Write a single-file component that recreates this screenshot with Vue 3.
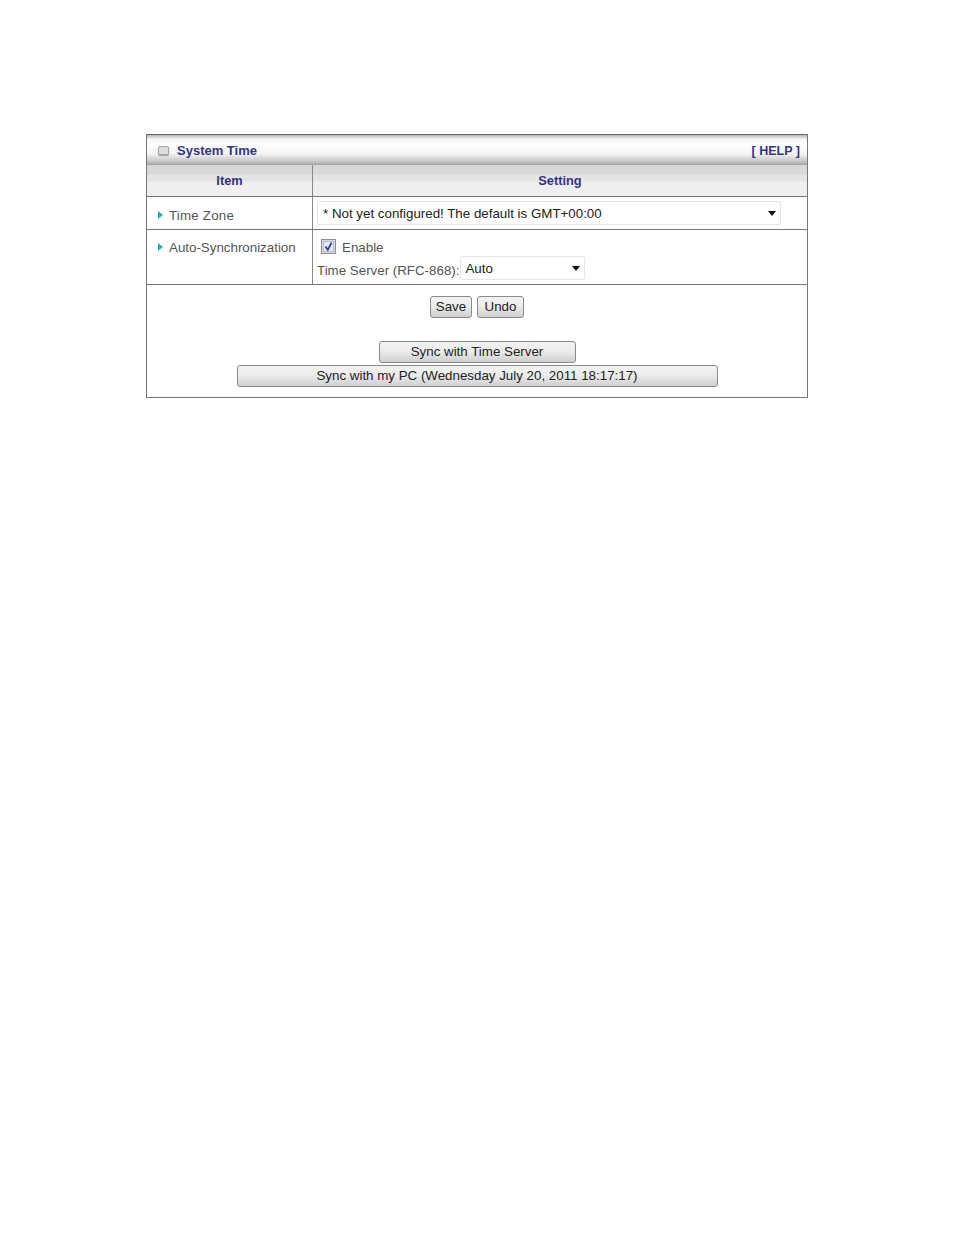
<script setup>
const pcTime = 'Wednesday July 20, 2011 18:17:17'
</script>

<template>
  <div class="page">
    <div class="panel">
      <div class="title-bar">
        <span class="title-icon"></span>
        <span class="title">System Time</span>
        <span class="help">[ HELP ]</span>
      </div>
      <div class="head-row">
        <div class="head-cell item-col">Item</div>
        <div class="head-cell">Setting</div>
      </div>
      <div class="row zone-row">
        <div class="item-col label">
          <svg class="arrow" width="5" height="8" viewBox="0 0 5 8"><path d="M0 0 L5 4 L0 8 Z" fill="#1fb5ad" /></svg>
          <span class="zone-text">Time Zone</span>
        </div>
        <div class="setting">
          <div class="select zone-select">
            <span>* Not yet configured! The default is GMT+00:00</span>
            <i class="caret"></i>
          </div>
        </div>
      </div>
      <div class="row sync-row">
        <div class="item-col label sync-label">
          <svg class="arrow" width="5" height="8" viewBox="0 0 5 8"><path d="M0 0 L5 4 L0 8 Z" fill="#1fb5ad" /></svg>
          <span>Auto-Synchronization</span>
        </div>
        <div class="setting sync-setting">
          <div class="enable-line">
            <svg class="check" width="15" height="15" viewBox="0 0 15 15">
              <rect x="0.5" y="0.5" width="14" height="14" fill="#d5d9e6" stroke="#8f8f8f" />
              <rect x="2.5" y="2.5" width="10" height="10" fill="#e4e8f4" stroke="#b9bfd2" />
              <path d="M4.5 7.5 L6.8 10.8 L10.6 3.6" fill="none" stroke="#2c3f9e" stroke-width="1.8" />
            </svg>
            <span>Enable</span>
          </div>
          <div class="server-line">
            <span>Time Server (RFC-868):</span>
            <div class="select server-select">
              <span>Auto</span>
              <i class="caret"></i>
            </div>
          </div>
        </div>
      </div>
      <div class="actions">
        <div class="save-line">
          <button class="btn save-btn">Save</button>
          <button class="btn undo-btn">Undo</button>
        </div>
        <button class="btn server-btn">Sync with Time Server</button>
        <button class="btn pc-btn">Sync with my PC ({{ pcTime }})</button>
      </div>
    </div>
  </div>
</template>

<style scoped>
.page { width: 954px; height: 1235px; padding: 134px 0 0 146px; box-sizing: border-box; background: #fff; font-family: "Liberation Sans", Arial, sans-serif; font-size: 13.33px; color: #555; overflow: hidden; }
.panel { width: 662px; box-sizing: border-box; border: 1px solid #777; border-top-color: #666; }
.title-bar { height: 30px; box-sizing: border-box; display: flex; align-items: center; padding: 0 7px 0 11px; background: linear-gradient(#b5b5b5 0, #f4f4f4 4px, #fff 10px, #f2f2f2 19px, #c2c2c2 27px, #a0a0a0 30px); }
.title-icon { width: 9px; height: 7px; border: 1px solid #a5a5a5; border-radius: 2px; background: #ddd; box-shadow: 0 1px 1px #999; }
.title { margin-left: 8px; font-size: 13px; font-weight: bold; color: #33338a; }
.help { margin-left: auto; margin-top: 2px; font-size: 12.5px; font-weight: bold; color: #33338a; }
.head-row { display: grid; grid-template-columns: 166px 1fr; height: 32px; border-bottom: 1px solid #777; box-sizing: border-box; background: linear-gradient(#d8d8d8 0, #d8d8d8 9px, #e4e4e4 10px, #e4e4e4 16px, #efefef 17px, #efefef 32px); }
.head-cell { display: flex; align-items: center; justify-content: center; font-size: 12.8px; font-weight: bold; color: #33338a; }
.item-col { border-right: 1px solid #888; }
.row { display: grid; grid-template-columns: 166px 1fr; box-sizing: border-box; border-bottom: 1px solid #777; }
.zone-row { height: 33px; }
.sync-row { height: 55px; }
.label { display: flex; align-items: center; gap: 6px; padding-left: 11px; }
.zone-text { letter-spacing: 0.2px; }
.zone-row .label { padding-top: 4px; }
.sync-label { align-items: flex-start; padding-top: 10px; }
.sync-label .arrow { margin-top: 3px; }
.setting { padding-left: 4px; display: flex; align-items: center; }
.select { position: relative; height: 24px; box-sizing: border-box; display: flex; align-items: center; padding-left: 5px; border: 1px solid #e6e6e6; border-radius: 2px; background: #fff; color: #222; }
.zone-select { width: 464px; }
.server-select { width: 125px; margin-left: 1px; padding-left: 4px; }
.caret { position: absolute; right: 4px; top: 9px; width: 0; height: 0; border-left: 4.5px solid transparent; border-right: 4.5px solid transparent; border-top: 5px solid #111; }
.sync-setting { flex-direction: column; align-items: flex-start; padding-top: 8px; }
.enable-line { display: flex; align-items: center; gap: 6px; padding-left: 4px; height: 18px; }
.check { margin-top: -2px; }
.server-line { display: flex; align-items: flex-start; }
.server-line > span { margin-top: 7px; }
.actions { height: 112px; display: flex; flex-direction: column; align-items: center; }
.save-line { display: flex; gap: 5px; margin-top: 11px; margin-bottom: 23px; }
.btn { height: 22px; padding: 0 0 2px; box-sizing: border-box; font: 13.33px "Liberation Sans", Arial, sans-serif; color: #222; border: 1px solid #8a8a8a; border-radius: 3px; background: linear-gradient(#f2f2f2, #ececec 45%, #cfcfcf); }
.save-btn { width: 42px; }
.undo-btn { width: 47px; }
.server-btn { width: 197px; }
.pc-btn { width: 481px; margin-top: 2px; }
</style>

<style>
html, body { margin: 0; background: #fff; }
</style>
